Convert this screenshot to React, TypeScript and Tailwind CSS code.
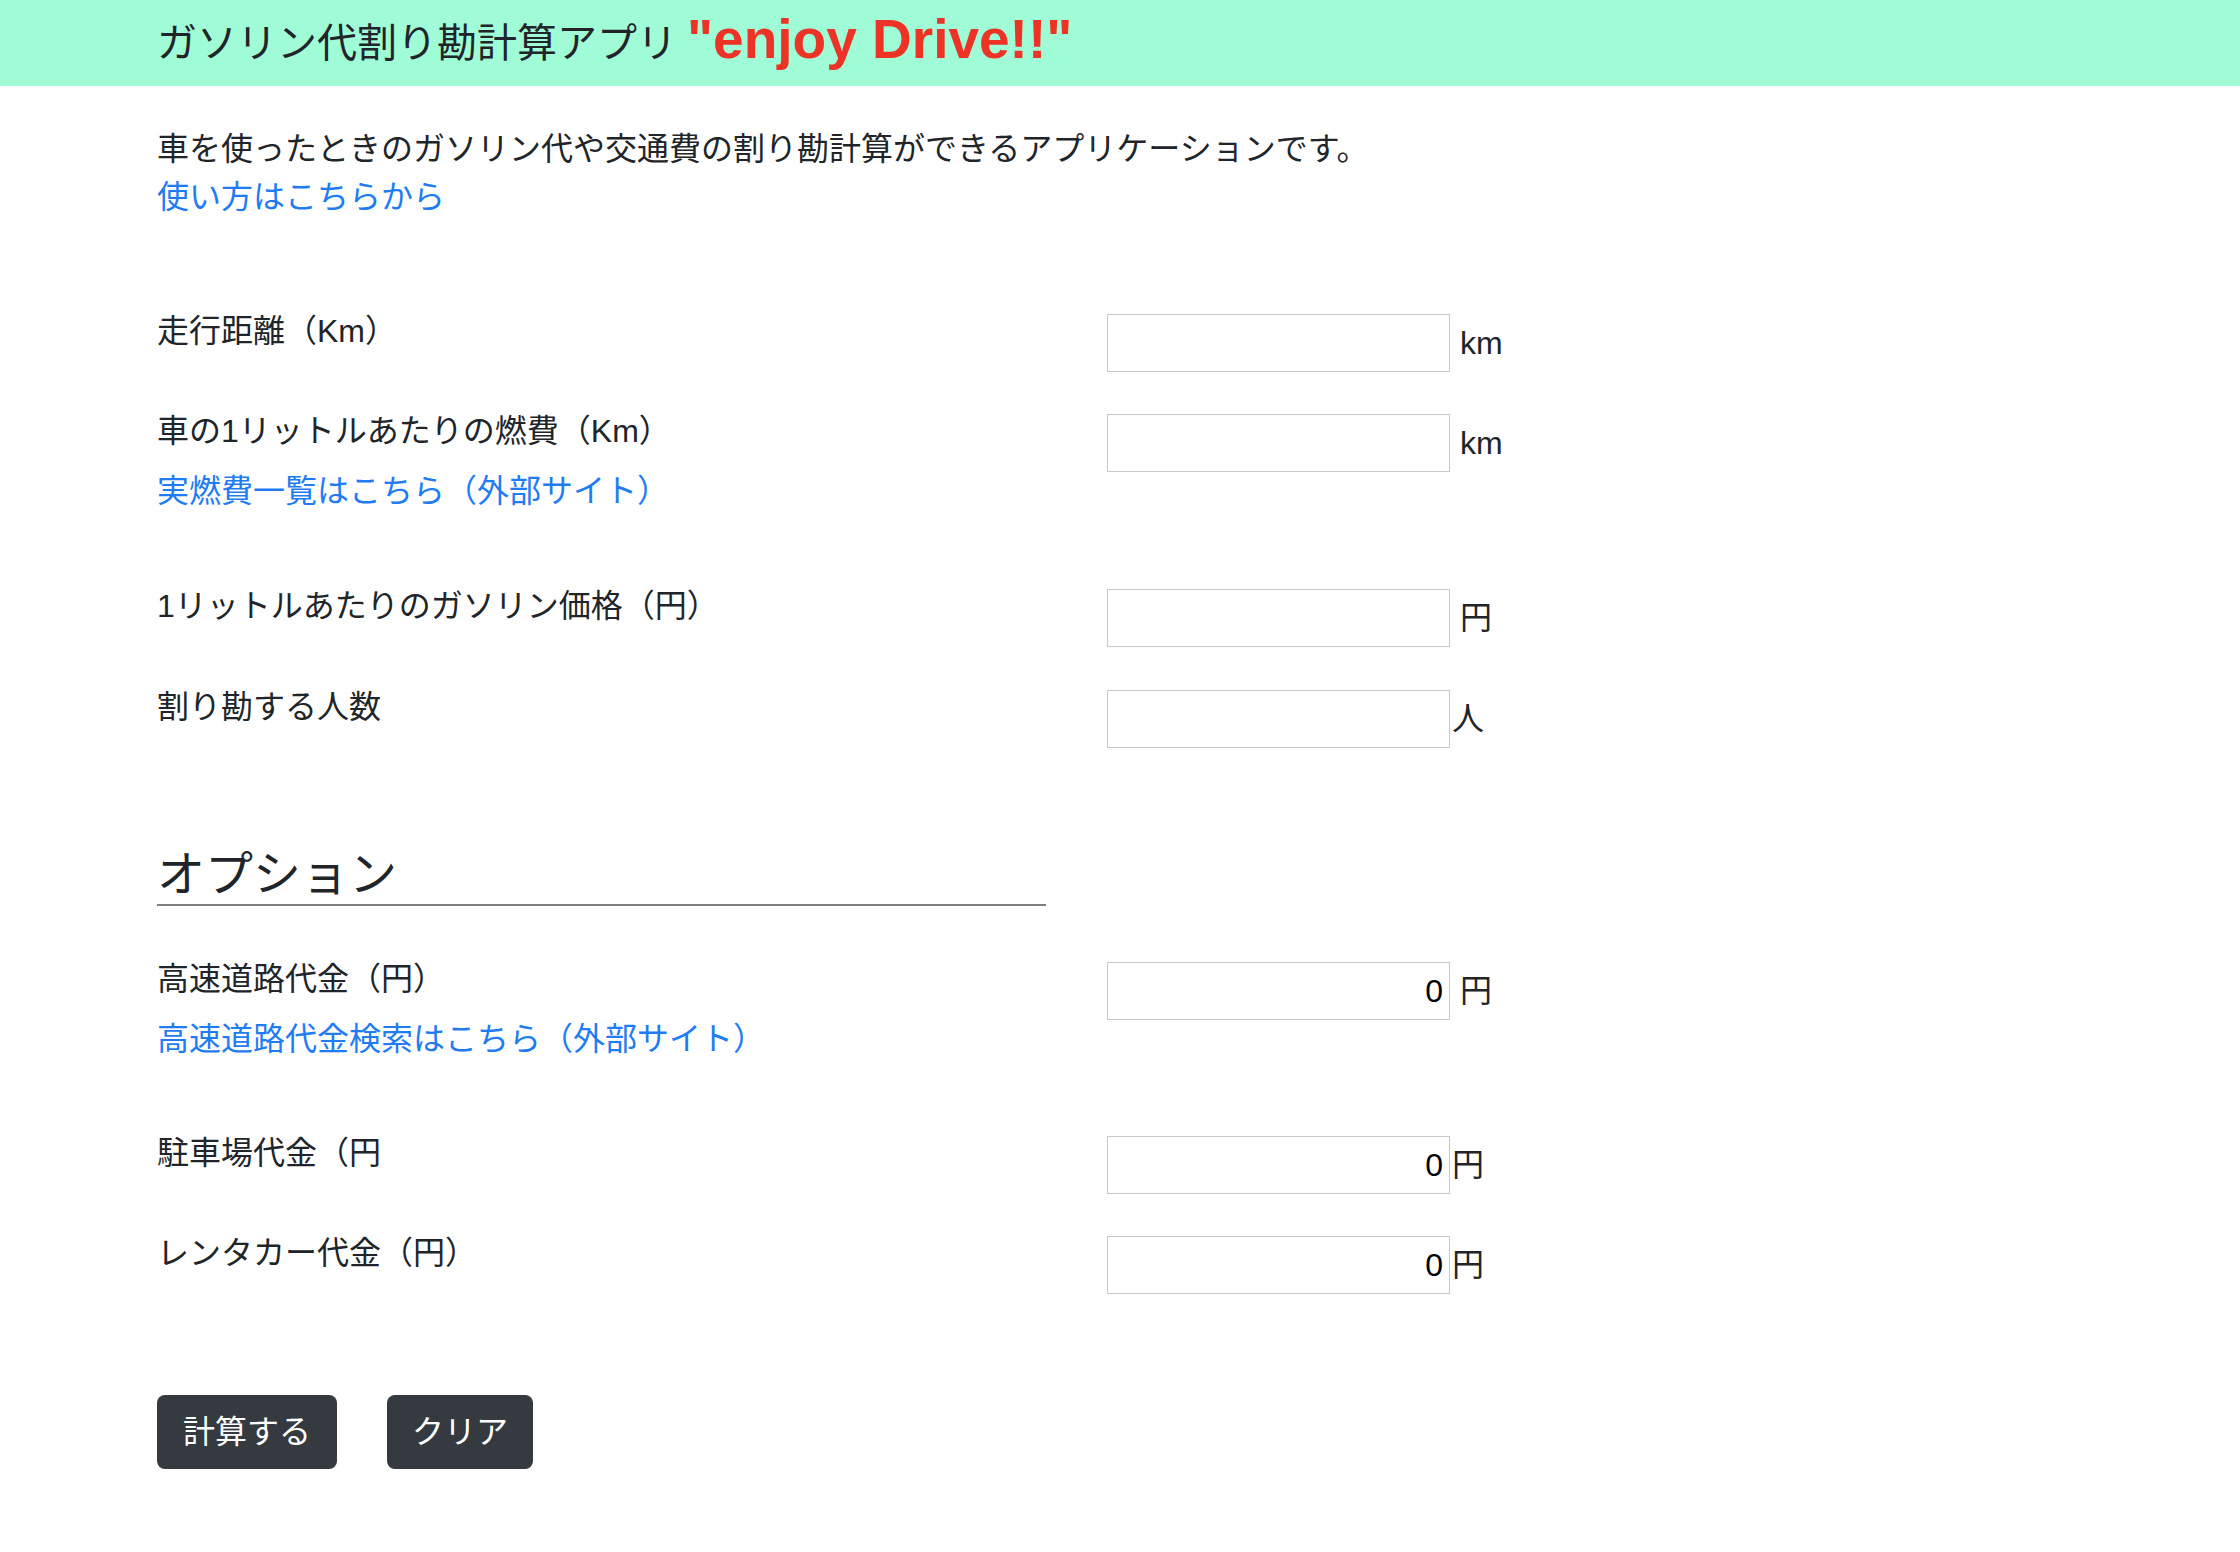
const font = { fontFamily: '"Liberation Sans", "Noto Sans CJK JP", sans-serif' };

type Row = {
  label: string;
  unit: string;
  spaced: boolean;
  value?: string;
  link?: string;
  mt: string;
};

function FormRow({ row }: { row: Row }) {
  return (
    <div className={`flex items-start ${row.mt}`}>
      <div className="w-[950px] shrink-0">
        <p className="text-[32px] leading-[48px] text-[#212529]">{row.label}</p>
        {row.link && (
          <a href="#" className="block mt-[12px] text-[32px] leading-[48px] text-[#1f7cf3]">
            {row.link}
          </a>
        )}
      </div>
      <div className="flex items-center mt-[7px]">
        <input
          type="text"
          defaultValue={row.value ?? ''}
          className="w-[343px] h-[58px] border border-[#c9c9c9] bg-white text-right pr-[6px] text-[32px] text-black outline-none"
          style={font}
        />
        <span className={`text-[32px] leading-[48px] text-[#212529] ${row.spaced ? 'ml-[10px]' : 'ml-[2px]'}`}>
          {row.unit}
        </span>
      </div>
    </div>
  );
}

const basicRows: Row[] = [
  { label: '走行距離（Km）', unit: 'km', spaced: true, mt: 'mt-0' },
  {
    label: '車の1リットルあたりの燃費（Km）',
    unit: 'km',
    spaced: true,
    link: '実燃費一覧はこちら（外部サイト）',
    mt: 'mt-[35px]',
  },
  { label: '1リットルあたりのガソリン価格（円）', unit: '円', spaced: true, mt: 'mt-[67px]' },
  { label: '割り勘する人数', unit: '人', spaced: false, mt: 'mt-[36px]' },
];

const optionRows: Row[] = [
  {
    label: '高速道路代金（円）',
    unit: '円',
    spaced: true,
    value: '0',
    link: '高速道路代金検索はこちら（外部サイト）',
    mt: 'mt-[49px]',
  },
  { label: '駐車場代金（円', unit: '円', spaced: false, value: '0', mt: 'mt-[66px]' },
  { label: 'レンタカー代金（円）', unit: '円', spaced: false, value: '0', mt: 'mt-[35px]' },
];

export default function App() {
  return (
    <div className="min-h-[1552px] bg-white" style={font}>
      {/* ヘッダー */}
      <header className="h-[86px] bg-[#a0fcd6] flex items-center pl-[157px]">
        <h1 className="flex items-center">
          <span className="text-[40px] text-[#212529]">ガソリン代割り勘計算アプリ</span>
          <span className="ml-[10px] text-[55px] font-bold text-[#ec3326] leading-none -mt-[8px]">
            "enjoy Drive!!"
          </span>
        </h1>
      </header>

      <main className="pl-[157px] pt-[39px] pb-[80px]">
        <p className="text-[32px] leading-[48px] text-[#212529]">
          車を使ったときのガソリン代や交通費の割り勘計算ができるアプリケーションです。
        </p>
        <a href="#" className="block text-[32px] leading-[48px] text-[#1f7cf3]">
          使い方はこちらから
        </a>

        <div className="mt-[86px]">
          {basicRows.map((r) => (
            <FormRow key={r.label} row={r} />
          ))}
        </div>

        {/* オプション */}
        <h2 className="mt-[98px] w-[889px] border-b-2 border-[#7f7f7f] text-[48px] leading-[58px] text-[#212529]">
          オプション
        </h2>

        <div>
          {optionRows.map((r) => (
            <FormRow key={r.label} row={r} />
          ))}
        </div>

        <div className="flex gap-[50px] mt-[101px]">
          <button className="h-[74px] px-[26px] rounded-[8px] bg-[#343a40] text-white text-[32px]">
            計算する
          </button>
          <button className="h-[74px] px-[25px] rounded-[8px] bg-[#343a40] text-white text-[32px]">
            クリア
          </button>
        </div>
      </main>
    </div>
  );
}
